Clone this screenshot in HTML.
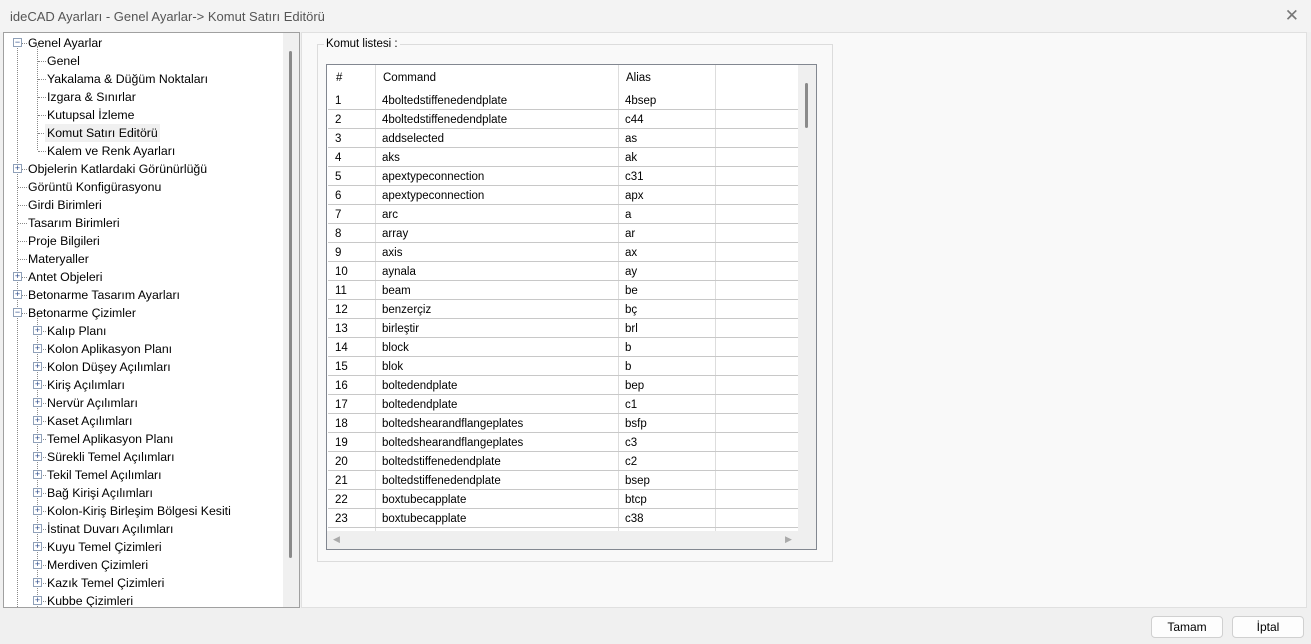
<!DOCTYPE html>
<html><head><meta charset="utf-8"><style>
*{box-sizing:border-box;margin:0;padding:0}
body{width:1311px;height:644px;background:#f0f0f0;font-family:"Liberation Sans",sans-serif;position:relative;overflow:hidden;color:#000}
.title{position:absolute;left:0;top:0;width:1311px;height:32px;background:#f3f3f3;font-size:13px;color:#555;padding:9px 0 0 10px}
.close{position:absolute;right:12px;top:6px;font-size:17px;color:#777;font-weight:300}
.tree{position:absolute;left:3px;top:32px;width:297px;height:576px;background:#fff;border:1px solid #a0a0a0;overflow:hidden;font-size:12.3px}
.sb{position:absolute;left:279px;top:0;width:17px;height:576px;background:#f0f0f0}
.sb i{position:absolute;left:6px;top:18px;width:3px;height:507px;background:#8a8a8a;border-radius:2px}
.r{position:absolute;height:18px;line-height:18px;white-space:nowrap}
.box{position:absolute;width:9px;height:9px;border:1px solid #8fa0b8;background:#fff;font-size:9px;line-height:7px;text-align:center;color:#2a4a8a}
.vl{position:absolute;border-left:1px dotted #888;width:0}
.hl{position:absolute;border-top:1px dotted #888;height:0;width:6px}
.right{position:absolute;left:301px;top:32px;width:1006px;height:576px;background:#f9f9f9;border:1px solid #e0e0e0}
.grp{position:absolute;left:317px;top:44px;width:516px;height:518px;border:1px solid #dcdcdc}
.leg{position:absolute;left:324px;top:38px;background:#f9f9f9;font-size:11.5px;padding:0 2px}
.lst{position:absolute;left:326px;top:64px;width:491px;height:486px;border:1px solid #828790;background:#fff;font-size:11.5px;overflow:hidden}
.row{position:absolute;left:1px;height:19px;width:470px;border-bottom:1px solid #c8c8c8}
.row span{position:absolute;top:4px}
.vsb{position:absolute;left:471px;top:0;width:18px;height:466px;background:#efefef}
.vsb i{position:absolute;left:7px;top:18px;width:3px;height:45px;background:#8a8a8a;border-radius:2px}
.hsb{position:absolute;left:0;top:466px;width:489px;height:18px;background:#efefef;font-size:9px;color:#aaa}
.btn{position:absolute;top:616px;width:72px;height:22px;border:1px solid #d0d0d0;border-radius:4px;background:#fdfdfd;font-size:12px;text-align:center;line-height:20px}
</style></head><body>
<div class="title">ideCAD Ayarları - Genel Ayarlar-&gt; Komut Satırı Editörü</div>
<div class="close">✕</div>
<div class="tree">
<div class="vl" style="left:13px;top:13px;height:563px"></div>
<div class="vl" style="left:33px;top:13px;height:104px"></div>
<div class="vl" style="left:33px;top:283px;height:293px"></div>
<div id="t"></div>
<div class="sb"><i></i></div>
</div>
<div class="right"></div>
<div class="grp"></div>
<div class="leg">Komut listesi :</div>
<div class="lst">
<div class="row" style="top:0;height:25px;border-bottom:none"><span style="left:8px;top:7px">#</span><span style="left:55px;top:7px">Command</span><span style="left:298px;top:7px">Alias</span></div>
<div style="position:absolute;left:48px;top:0;height:466px;border-left:1px solid #ddd"></div>
<div style="position:absolute;left:291px;top:0;height:466px;border-left:1px solid #ddd"></div>
<div style="position:absolute;left:388px;top:0;height:466px;border-left:1px solid #ddd"></div>
<div id="rows"></div>
<div class="vsb"><i></i></div>
<div class="hsb"><span style="position:absolute;left:6px;top:3px">◀</span><span style="position:absolute;left:458px;top:3px">▶</span></div>
</div>
<div class="btn" style="left:1151px">Tamam</div>
<div class="btn" style="left:1232px">İptal</div>
<script>
var T=[[0,'-','Genel Ayarlar'],[1,'','Genel'],[1,'','Yakalama &amp; Düğüm Noktaları'],[1,'','Izgara &amp; Sınırlar'],[1,'','Kutupsal İzleme'],[1,'','Komut Satırı Editörü',1],[1,'','Kalem ve Renk Ayarları'],[0,'+','Objelerin Katlardaki Görünürlüğü'],[0,'','Görüntü Konfigürasyonu'],[0,'','Girdi Birimleri'],[0,'','Tasarım Birimleri'],[0,'','Proje Bilgileri'],[0,'','Materyaller'],[0,'+','Antet Objeleri'],[0,'+','Betonarme Tasarım Ayarları'],[0,'-','Betonarme Çizimler'],[1,'+','Kalıp Planı'],[1,'+','Kolon Aplikasyon Planı'],[1,'+','Kolon Düşey Açılımları'],[1,'+','Kiriş Açılımları'],[1,'+','Nervür Açılımları'],[1,'+','Kaset Açılımları'],[1,'+','Temel Aplikasyon Planı'],[1,'+','Sürekli Temel Açılımları'],[1,'+','Tekil Temel Açılımları'],[1,'+','Bağ Kirişi Açılımları'],[1,'+','Kolon-Kiriş Birleşim Bölgesi Kesiti'],[1,'+','İstinat Duvarı Açılımları'],[1,'+','Kuyu Temel Çizimleri'],[1,'+','Merdiven Çizimleri'],[1,'+','Kazık Temel Çizimleri'],[1,'+','Kubbe Çizimleri']];
var h='';T.forEach(function(e,i){var y=1+18*i,bx=e[0]?29:9,tx=e[0]?43:24;
h+='<div class="hl" style="left:'+(bx+5)+'px;top:'+(y+9)+'px;width:'+(tx-bx-6)+'px"></div>';
if(e[1])h+='<div class="box" style="left:'+bx+'px;top:'+(y+4)+'px">'+(e[1]=='-'?'−':'+')+'</div>';
h+='<div class="r" style="left:'+(tx-2)+'px;top:'+y+'px;padding:0 2px;'+(e[3]?'background:#f0f0f0':'')+'">'+e[2]+'</div>';});
document.getElementById('t').innerHTML=h;
var R=[['4boltedstiffenedendplate','4bsep'],['4boltedstiffenedendplate','c44'],['addselected','as'],['aks','ak'],['apextypeconnection','c31'],['apextypeconnection','apx'],['arc','a'],['array','ar'],['axis','ax'],['aynala','ay'],['beam','be'],['benzerçiz','bç'],['birleştir','brl'],['block','b'],['blok','b'],['boltedendplate','bep'],['boltedendplate','c1'],['boltedshearandflangeplates','bsfp'],['boltedshearandflangeplates','c3'],['boltedstiffenedendplate','c2'],['boltedstiffenedendplate','bsep'],['boxtubecapplate','btcp'],['boxtubecapplate','c38'],['','']];
h='';R.forEach(function(r,i){var y=26+19*i;h+='<div class="row" style="top:'+y+'px"><span style="left:7px">'+(i<23?i+1:'')+'</span><span style="left:54px">'+r[0]+'</span><span style="left:297px">'+r[1]+'</span></div>';});
document.getElementById('rows').innerHTML=h;
</script>
</body></html>
